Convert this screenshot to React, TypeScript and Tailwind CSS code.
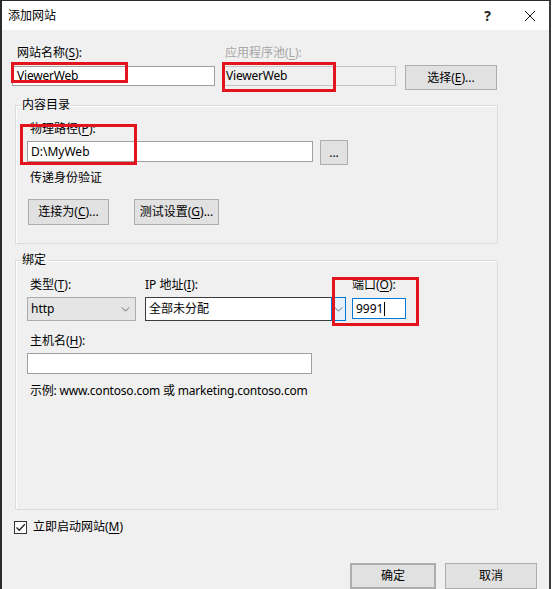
import React, { FC, ReactNode } from 'react';

// access-key letter, underlined like in Win32 dialogs
const Key: FC<{ k: string }> = ({ k }) => (
  <span className="underline underline-offset-2 decoration-1">{k}</span>
);

const Label: FC<{ children: ReactNode; className?: string }> = ({
  children,
  className = '',
}) => <div className={`h-4 leading-4 whitespace-nowrap ${className}`}>{children}</div>;

const WinButton: FC<{ children: ReactNode; className?: string }> = ({
  children,
  className = '',
}) => (
  <div
    className={`flex items-center justify-center bg-[#e1e1e1] border border-[#adadad] leading-4 ${className}`}
  >
    {children}
  </div>
);

const Chevron: FC<{ className?: string }> = ({ className = '' }) => (
  <svg viewBox="0 0 10 6" className={`w-[9px] h-[5px] ${className}`}>
    <path d="M0.5 0.5 L5 5 L9.5 0.5" fill="none" stroke="#606060" strokeWidth="1.1" />
  </svg>
);

const Annotation: FC<{ className: string }> = ({ className }) => (
  <div className={`absolute border-[3px] border-[#e3141d] pointer-events-none ${className}`} />
);

const GroupBox: FC<{ title: string; className?: string; children: ReactNode }> = ({
  title,
  className = '',
  children,
}) => (
  <div className={`ml-[3px] w-[483px] border border-[#dcdcdc] shadow-[inset_1px_1px_0_#ffffff] ${className}`}>
    <div className="-mt-[9px] ml-[5px] w-fit h-4 leading-4 px-[1px] bg-[#f0f0f0]">{title}</div>
    {children}
  </div>
);

const App: FC = () => {
  return (
    <div className="relative w-[551px] h-[589px] overflow-hidden flex flex-col bg-[#f0f0f0] text-[12px] text-black border-t border-t-[#2b2b2b] border-l-2 border-l-[#2b2b2b] border-r-2 border-r-[#3a3a3a] font-['Segoe_UI','Noto_Sans','Noto_Sans_CJK_SC',sans-serif]">
      {/* title bar */}
      <div className="h-[29px] shrink-0 flex items-center bg-white pl-[6px]">
        <span className="leading-4">添加网站</span>
        <span className="ml-auto mr-[34px] text-[14px] font-bold leading-4 text-[#222]">?</span>
        <svg viewBox="0 0 10 10" className="w-[10px] h-[10px] mr-[14px]">
          <path d="M0 0 L10 10 M10 0 L0 10" stroke="#111" strokeWidth="1" />
        </svg>
      </div>

      <div className="flex-1 flex flex-col pl-[10px]">
        {/* site name / app pool */}
        <div className="mt-[15px] flex items-start">
          <div className="flex flex-col w-[203px]">
            <Label className="pl-[5px]">
              网站名称(<Key k="S" />):
            </Label>
            <div className="mt-[5px] h-[20px] bg-white border border-[#a0a0a0] pl-[4px] leading-[18px] tracking-[-0.2px]">
              ViewerWeb
            </div>
          </div>
          <div className="ml-[7px] flex flex-col w-[174px]">
            <Label className="pl-[3px] text-[#a6a6a6]">
              应用程序池(<Key k="L" />):
            </Label>
            <div className="mt-[5px] h-[20px] bg-[#f0f0f0] border border-[#c4c4c4] pl-[3px] leading-[18px] tracking-[-0.2px]">
              ViewerWeb
            </div>
          </div>
          <WinButton className="ml-[9px] mt-[20px] w-[92px] h-[25px]">
            选择(<Key k="E" />)...
          </WinButton>
        </div>

        {/* content directory */}
        <GroupBox title="内容目录" className="mt-[15px] h-[139px]">
          <div className="pl-[11px] flex flex-col">
            <Label className="mt-[8px] pl-[3px]">
              物理路径(<Key k="P" />):
            </Label>
            <div className="mt-[3px] flex items-start">
              <div className="mt-[1px] w-[286px] h-[21px] bg-white border border-[#a0a0a0] pl-[3px] leading-[19px]">
                D:\MyWeb
              </div>
              <WinButton className="ml-[7px] w-[28px] h-[25px]">...</WinButton>
            </div>
            <Label className="mt-[5px] pl-[3px]">传递身份验证</Label>
            <div className="mt-[13px] flex">
              <WinButton className="ml-[1px] w-[81px] h-[26px]">
                连接为(<Key k="C" />)...
              </WinButton>
              <WinButton className="ml-[25px] w-[85px] h-[26px]">
                测试设置(<Key k="G" />)...
              </WinButton>
            </div>
          </div>
        </GroupBox>

        {/* binding */}
        <GroupBox title="绑定" className="mt-[16px] h-[250px]">
          <div className="pl-[11px] flex flex-col">
            <div className="mt-[9px] flex items-start">
              <div className="flex flex-col w-[109px]">
                <Label className="pl-[3px]">
                  类型(<Key k="T" />):
                </Label>
                <div className="mt-[4px] h-[24px] flex items-center bg-[#e5e5e5] border border-[#acacac] pl-[3px] pr-[5px]">
                  <span className="leading-4">http</span>
                  <Chevron className="ml-auto" />
                </div>
              </div>
              <div className="ml-[9px] flex flex-col">
                <Label>
                  IP 地址(<Key k="I" />):
                </Label>
                <div className="mt-[4px] h-[24px] flex">
                  <div className="w-[186px] h-full bg-white border border-[#3c3c3c] border-r-0 pl-[3px] leading-[22px]">
                    全部未分配
                  </div>
                  <div className="w-[15px] h-full flex items-center justify-center bg-[#e5f1fb] border border-[#0078d7]">
                    <Chevron />
                  </div>
                </div>
              </div>
              <div className="ml-[6px] flex flex-col">
                <Label>
                  端口(<Key k="O" />):
                </Label>
                <div className="mt-[5px] w-[54px] h-[21px] flex items-center bg-white border border-[#0078d7] pl-[3px]">
                  <span className="leading-4">9991</span>
                  <span className="ml-[1px] w-px h-[14px] bg-black" />
                </div>
              </div>
            </div>
            <Label className="mt-[12px] pl-[3px]">
              主机名(<Key k="H" />):
            </Label>
            <div className="mt-[4px] w-[285px] h-[21px] bg-white border border-[#a0a0a0]" />
            <Label className="mt-[9px] pl-[3px] tracking-[-0.2px]">
              示例: www.contoso.com 或 marketing.contoso.com
            </Label>
          </div>
        </GroupBox>

        {/* start immediately */}
        <div className="mt-[9px] h-4 flex items-center">
          <div className="ml-[2px] w-[13px] h-[13px] bg-white border border-[#333] flex items-center justify-center">
            <svg viewBox="0 0 11 11" className="w-[11px] h-[11px]">
              <path d="M1.5 5.5 L4.3 8.3 L9.8 2.3" fill="none" stroke="#222" strokeWidth="1.3" />
            </svg>
          </div>
          <span className="ml-[6px] leading-4">
            立即启动网站(<Key k="M" />)
          </span>
        </div>

        {/* dialog buttons */}
        <div className="mt-[28px] flex justify-end pr-[12px]">
          <WinButton className="w-[86px] h-[26px] border-2 border-[#0078d7]">确定</WinButton>
          <WinButton className="ml-[9px] w-[92px] h-[26px]">取消</WinButton>
        </div>
      </div>

      {/* red highlight marks drawn over the dialog */}
      <Annotation className="left-[9px] top-[61px] w-[117px] h-[21px]" />
      <Annotation className="left-[220px] top-[61px] w-[114px] h-[30px]" />
      <Annotation className="left-[18px] top-[123px] w-[117px] h-[41px]" />
      <Annotation className="left-[330px] top-[276px] w-[87px] h-[49px]" />
    </div>
  );
};

export default App;
